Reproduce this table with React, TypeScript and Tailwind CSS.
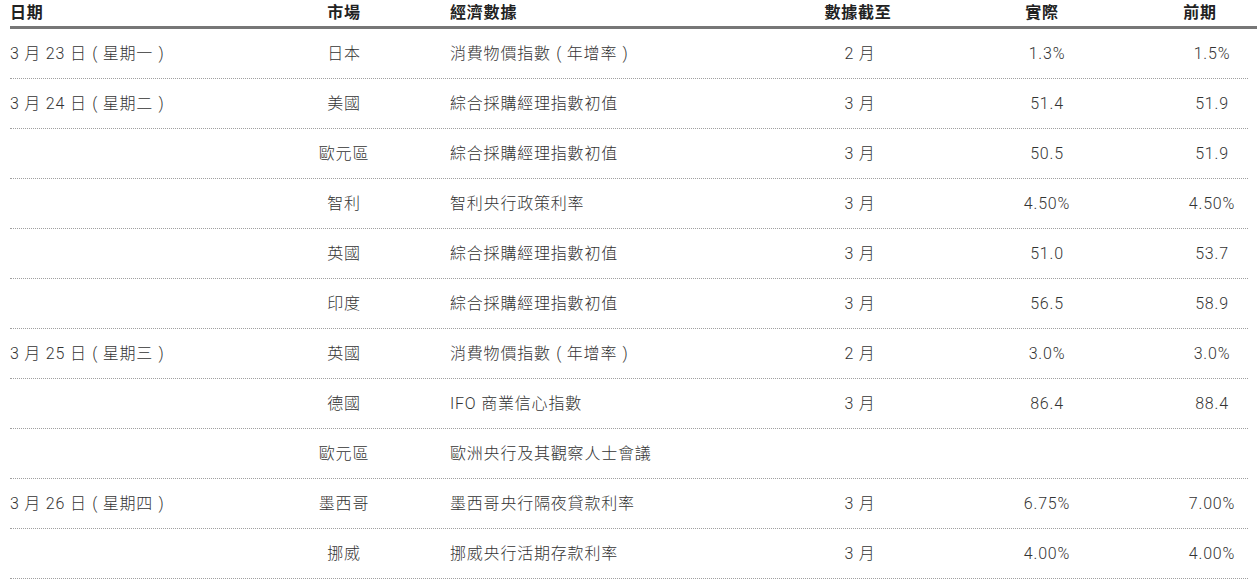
import { Fragment } from "react"

const rows = [
  { date: "3 月 23 日（星期一）", market: "日本", item: "消費物價指數（年增率）", asOf: "2 月", actual: "1.3%", prior: "1.5%" },
  { date: "3 月 24 日（星期二）", market: "美國", item: "綜合採購經理指數初值", asOf: "3 月", actual: "51.4", prior: "51.9" },
  { date: "", market: "歐元區", item: "綜合採購經理指數初值", asOf: "3 月", actual: "50.5", prior: "51.9" },
  { date: "", market: "智利", item: "智利央行政策利率", asOf: "3 月", actual: "4.50%", prior: "4.50%" },
  { date: "", market: "英國", item: "綜合採購經理指數初值", asOf: "3 月", actual: "51.0", prior: "53.7" },
  { date: "", market: "印度", item: "綜合採購經理指數初值", asOf: "3 月", actual: "56.5", prior: "58.9" },
  { date: "3 月 25 日（星期三）", market: "英國", item: "消費物價指數（年增率）", asOf: "2 月", actual: "3.0%", prior: "3.0%" },
  { date: "", market: "德國", item: "IFO 商業信心指數", asOf: "3 月", actual: "86.4", prior: "88.4" },
  { date: "", market: "歐元區", item: "歐洲央行及其觀察人士會議", asOf: "", actual: "", prior: "" },
  { date: "3 月 26 日（星期四）", market: "墨西哥", item: "墨西哥央行隔夜貸款利率", asOf: "3 月", actual: "6.75%", prior: "7.00%" },
  { date: "", market: "挪威", item: "挪威央行活期存款利率", asOf: "3 月", actual: "4.00%", prior: "4.00%" },
]

const cols = "grid grid-cols-[280px_108px_400px_120px_258px_72px] w-[1238px]"

// full-width brackets drawn with the glyph centred in its em box
function Txt({ s }: { s: string }) {
  const parts = s.split(/([（）])/)
  return (
    <>
      {parts.map((p, i) =>
        p === "（" || p === "）" ? (
          <span key={i} className="inline-block w-[16px] text-center tracking-normal">
            {p === "（" ? "(" : ")"}
          </span>
        ) : (
          <Fragment key={i}>{p}</Fragment>
        )
      )}
    </>
  )
}

export default function App() {
  return (
    <div
      className="bg-white w-[1257px] h-[582px] overflow-hidden text-[16px] tracking-[0.8px]"
      style={{ fontFamily: 'Roboto, "Noto Sans CJK TC", sans-serif' }}
    >
      {/* Header */}
      <div className="ml-[10px] w-[1247px] border-b-[3px] border-[#777777]">
        <div className={`${cols} h-[26px] items-center font-bold text-[#222222]`}>
          <div>日期</div>
          <div className="text-center">市場</div>
          <div className="pl-[52px]">經濟數據</div>
          <div className="text-center">數據截至</div>
          <div className="text-center pr-[10px]">實際</div>
          <div className="text-center pr-[24px]">前期</div>
        </div>
      </div>

      {/* Body */}
      <div className="ml-[10px]">
        {rows.map((r, i) => (
          <div
            key={i}
            className={`${cols} h-[50px] items-center border-b border-dotted border-[#a0a0a0] font-light text-[#333333] whitespace-pre`}
          >
            <div><Txt s={r.date} /></div>
            <div className="text-center">{r.market}</div>
            <div className="pl-[52px]"><Txt s={r.item} /></div>
            <div className="text-center pl-[4px]">{r.asOf}</div>
            <div className="text-center">{r.actual}</div>
            <div className="text-center">{r.prior}</div>
          </div>
        ))}
      </div>
    </div>
  )
}
